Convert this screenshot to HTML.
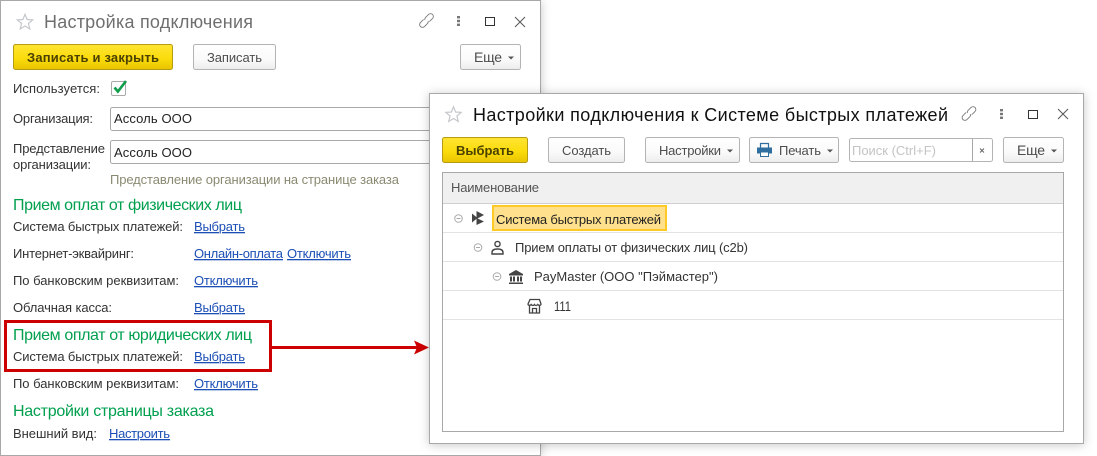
<!DOCTYPE html>
<html><head><meta charset="utf-8"><style>
html,body{margin:0;padding:0;background:#fff;width:1097px;height:456px;overflow:hidden}
svg{display:block}
text{font-family:"Liberation Sans",Arial,sans-serif;font-size:13px;fill:#333;white-space:pre}
.l{fill:#1c4fb5;text-decoration:underline}
.h{font-size:16px;fill:#00a04f}
.b{font-weight:bold;fill:#4a4000}
.g{fill:#4d4d4d}
.e{font-size:14px;fill:#4d4d4d}
</style></head><body>
<svg width="1097" height="456" viewBox="0 0 1097 456" xmlns="http://www.w3.org/2000/svg">
<defs>
<linearGradient id="y" x1="0" y1="0" x2="0" y2="1"><stop offset="0" stop-color="#ffe433"/><stop offset=".55" stop-color="#fbdc0c"/><stop offset="1" stop-color="#e8c400"/></linearGradient>
<linearGradient id="w" x1="0" y1="0" x2="0" y2="1"><stop offset="0" stop-color="#fff"/><stop offset=".6" stop-color="#fafafa"/><stop offset="1" stop-color="#ececec"/></linearGradient>
<filter id="s" x="-5%" y="-5%" width="110%" height="110%"><feDropShadow dx="0" dy="1" stdDeviation="5" flood-color="#000" flood-opacity=".22"/></filter>
<g id="star"><path d="M8.5 .8 L10.600 6 L16.200 6.400 L11.900 10 L13.300 15.500 L8.500 12.500 L3.700 15.500 L5.100 10 L.8 6.400 L6.400 6 Z" fill="none" stroke="#c4c8cc" stroke-width="1.200"/></g>
<g id="lnk" fill="none" stroke="#777" stroke-width="1"><g transform="rotate(-45) scale(.88)"><path d="M-1.500 -3.200H-6.500a3.200 3.200 0 0 0 0 6.400H-1.500a3.200 3.200 0 0 0 2.500 -1.500"/><path d="M1.500 3.200H6.500a3.200 3.200 0 0 0 0 -6.400H1.500a3.200 3.200 0 0 0 -2.500 1.500"/></g></g>
<g id="dots" fill="#777"><rect x="-1.500" y="-5" width="3" height="2.400"/><rect x="-1.500" y="-1.200" width="3" height="2.400"/><rect x="-1.500" y="2.600" width="3" height="2.400"/></g>
<g id="arr"><path d="M-3 -1.500h6L0 1.500z" fill="#555"/></g>
<g id="minus" fill="none" stroke="#aaa"><circle cx="0" cy="0" r="3.800"/><path d="M-2 0h4"/></g>
</defs>

<!-- window 1 -->
<rect x=".5" y=".5" width="540" height="455" fill="#fff" stroke="#a8a8a8" filter="url(#s)"/>
<use href="#star" x="16.500" y="13.500"/>
<text x="44" y="28" style="font-size:18px;fill:#6f6f6f" textLength="209">Настройка подключения</text>
<use href="#lnk" x="426.500" y="20.500"/>
<use href="#dots" x="458.500" y="21"/>
<rect x="485.500" y="17.500" width="9" height="8" fill="none" stroke="#333"/>
<path d="M515 17l10 10M525 17l-10 10" stroke="#555" fill="none"/>

<rect x="13.500" y="44.500" width="159" height="25" rx="2" fill="url(#y)" stroke="#b59c12"/>
<text class="b" x="27" y="62" textLength="132">Записать и закрыть</text>
<rect x="193.500" y="44.500" width="82" height="25" rx="2" fill="url(#w)" stroke="#b4b4b4"/>
<text class="g" x="207" y="62" textLength="55">Записать</text>
<rect x="460.500" y="44.500" width="60" height="25" rx="2" fill="url(#w)" stroke="#b4b4b4"/>
<text class="e" x="474" y="62" textLength="28">Еще</text>
<use href="#arr" x="511" y="58"/>

<text x="13" y="93" textLength="87">Используется:</text>
<rect x="111.500" y="81.500" width="14" height="14" rx="1.500" fill="#fff" stroke="#aaa"/>
<path d="M114.500 87.500l3.400 4L126 81" fill="none" stroke="#0f9d4c" stroke-width="2.600"/>

<text x="13" y="123" textLength="80">Организация:</text>
<rect x="110.500" y="107.500" width="420" height="23" rx="2" fill="#fff" stroke="#a8a8a8"/>
<text x="114" y="123" style="fill:#222" textLength="78">Ассоль ООО</text>

<text x="13" y="153" textLength="92">Представление</text>
<text x="13" y="169" textLength="78">организации:</text>
<rect x="110.500" y="140.500" width="420" height="23" rx="2" fill="#fff" stroke="#a8a8a8"/>
<text x="114" y="157" style="fill:#222" textLength="78">Ассоль ООО</text>
<text x="110" y="184" style="fill:#8a8a72" textLength="289">Представление организации на странице заказа</text>

<text class="h" x="13" y="210" textLength="229">Прием оплат от физических лиц</text>
<text x="13" y="231" textLength="170">Система быстрых платежей:</text>
<text class="l" x="194" y="231" textLength="51">Выбрать</text>
<text x="13" y="258" textLength="121">Интернет-эквайринг:</text>
<text class="l" x="194" y="258" textLength="89">Онлайн-оплата</text>
<text class="l" x="287" y="258" textLength="64">Отключить</text>
<text x="13" y="285" textLength="166">По банковским реквизитам:</text>
<text class="l" x="194" y="285" textLength="64">Отключить</text>
<text x="13" y="312" textLength="99">Облачная касса:</text>
<text class="l" x="194" y="312" textLength="51">Выбрать</text>

<text class="h" x="13" y="340" textLength="239">Прием оплат от юридических лиц</text>
<text x="13" y="361" textLength="170">Система быстрых платежей:</text>
<text class="l" x="194" y="361" textLength="51">Выбрать</text>
<text x="13" y="388" textLength="166">По банковским реквизитам:</text>
<text class="l" x="194" y="388" textLength="64">Отключить</text>
<text class="h" x="13" y="416" textLength="201">Настройки страницы заказа</text>
<text x="13" y="438" textLength="84">Внешний вид:</text>
<text class="l" x="109" y="438" textLength="61">Настроить</text>

<!-- red box + arrow -->
<rect x="5.500" y="321.500" width="265" height="49" fill="none" stroke="#cc0000" stroke-width="3"/>
<path d="M272 347.500H420" stroke="#cc0000" stroke-width="3"/>
<path d="M414 340.500L429 347.500L414 354.500L417 347.500Z" fill="#cc0000"/>

<!-- window 2 -->
<rect x="429.500" y="93.500" width="654" height="350" fill="#fff" stroke="#a8a8a8" filter="url(#s)"/>
<use href="#star" x="445" y="106"/>
<text x="473" y="121" style="font-size:18px;fill:#111" textLength="475">Настройки подключения к Системе быстрых платежей</text>
<use href="#lnk" x="969" y="113.500"/>
<use href="#dots" x="1001.500" y="114"/>
<rect x="1028.500" y="110.500" width="9" height="8" fill="none" stroke="#333"/>
<path d="M1058 109l10 10M1068 109l-10 10" stroke="#555" fill="none"/>

<rect x="442.500" y="137.500" width="85" height="25" rx="2" fill="url(#y)" stroke="#b59c12"/>
<text class="b" x="456" y="155" textLength="58">Выбрать</text>
<rect x="548.500" y="137.500" width="76" height="25" rx="2" fill="url(#w)" stroke="#b4b4b4"/>
<text class="g" x="562" y="155" textLength="49">Создать</text>
<rect x="645.500" y="137.500" width="94" height="25" rx="2" fill="url(#w)" stroke="#b4b4b4"/>
<text class="g" x="659" y="155" textLength="62">Настройки</text>
<use href="#arr" x="730" y="151"/>
<rect x="749.500" y="137.500" width="89" height="25" rx="2" fill="url(#w)" stroke="#b4b4b4"/>
<path d="M760.500 147.500v-4h8v4" fill="none" stroke="#2f6f9f" stroke-width="1.200"/>
<path d="M757 147.500h15v6h-3v-2h-9v2h-3z" fill="#2f6f9f"/>
<rect x="760.500" y="152" width="8" height="4.500" fill="#fff" stroke="#2f6f9f"/>
<text class="g" x="779" y="155" textLength="42">Печать</text>
<use href="#arr" x="830" y="151"/>
<rect x="849.500" y="138.500" width="143" height="23" rx="2" fill="#fff" stroke="#b4b4b4"/>
<path d="M972.500 139v22" stroke="#a8a8a8"/>
<text x="852" y="155" style="fill:#c4c4c4" textLength="84">Поиск (Ctrl+F)</text>
<path d="M980 148.500l4 4M984 148.500l-4 4" stroke="#666" fill="none"/>
<rect x="1003.500" y="137.500" width="60" height="25" rx="2" fill="url(#w)" stroke="#b4b4b4"/>
<text class="e" x="1017" y="155" textLength="28">Еще</text>
<use href="#arr" x="1054" y="151"/>

<rect x="442.500" y="172.500" width="621" height="259" fill="#fff" stroke="#a8a8a8"/>
<rect x="443" y="173" width="620" height="30" fill="#f0f0f0"/>
<path d="M443 203.500H1063" stroke="#cfcfcf"/>
<text x="451" y="192" style="fill:#555" textLength="88">Наименование</text>
<path d="M443 232.500H1063M443 261.500H1063M443 290.500H1063M443 319.500H1063" stroke="#e2e2e2"/>

<rect x="493" y="206" width="173" height="24" fill="#ffe08c" stroke="#ffc926" stroke-width="2"/>
<use href="#minus" x="458.500" y="218.500"/>
<path d="M472 213.500l5.500 4.500-5.500 4.500zM476.500 211l7.500 4-7.500 4zM476.500 218l7.500 3.500-7.500 3.500z" fill="#444"/>
<text x="496" y="224" style="fill:#222" textLength="165">Система быстрых платежей</text>

<use href="#minus" x="478" y="247.500"/>
<circle cx="497.500" cy="244" r="2.600" fill="none" stroke="#444" stroke-width="1.400"/>
<path d="M492 254v-1.500c0-3 2.500-3.500 5.500-3.500s5.500 .5 5.500 3.500V254z" fill="none" stroke="#444" stroke-width="1.400"/>
<text x="515" y="252" textLength="233">Прием оплаты от физических лиц (c2b)</text>

<use href="#minus" x="497" y="276.500"/>
<path d="M516 270l7 4v1.500h-14V274z" fill="#444"/>
<path d="M510 276.500h2v5h-2zM513 276.500h2v5h-2zM517 276.500h2v5h-2zM520 276.500h2v5h-2zM509 282.500h14v1.500h-14z" fill="#444"/>
<text x="534" y="281" textLength="184">PayMaster (ООО "Пэймастер")</text>

<path d="M530 299.500h9.500l1.500 4.500c0 1.500-2.200 1.800-3.200 .5c-1 1.300-2.600 1.300-3.300 0c-.8 1.300-2.400 1.300-3.300 0c-1 1.300-3.200 1-3.200-.5z" fill="none" stroke="#444" stroke-width="1.300"/>
<path d="M529.500 306v7h10v-7M532.500 313v-4.500h4v4.500" fill="none" stroke="#444" stroke-width="1.300"/>
<text x="554" y="311" style="font-size:14px" textLength="17" lengthAdjust="spacingAndGlyphs">111</text>
</svg>
</body></html>
